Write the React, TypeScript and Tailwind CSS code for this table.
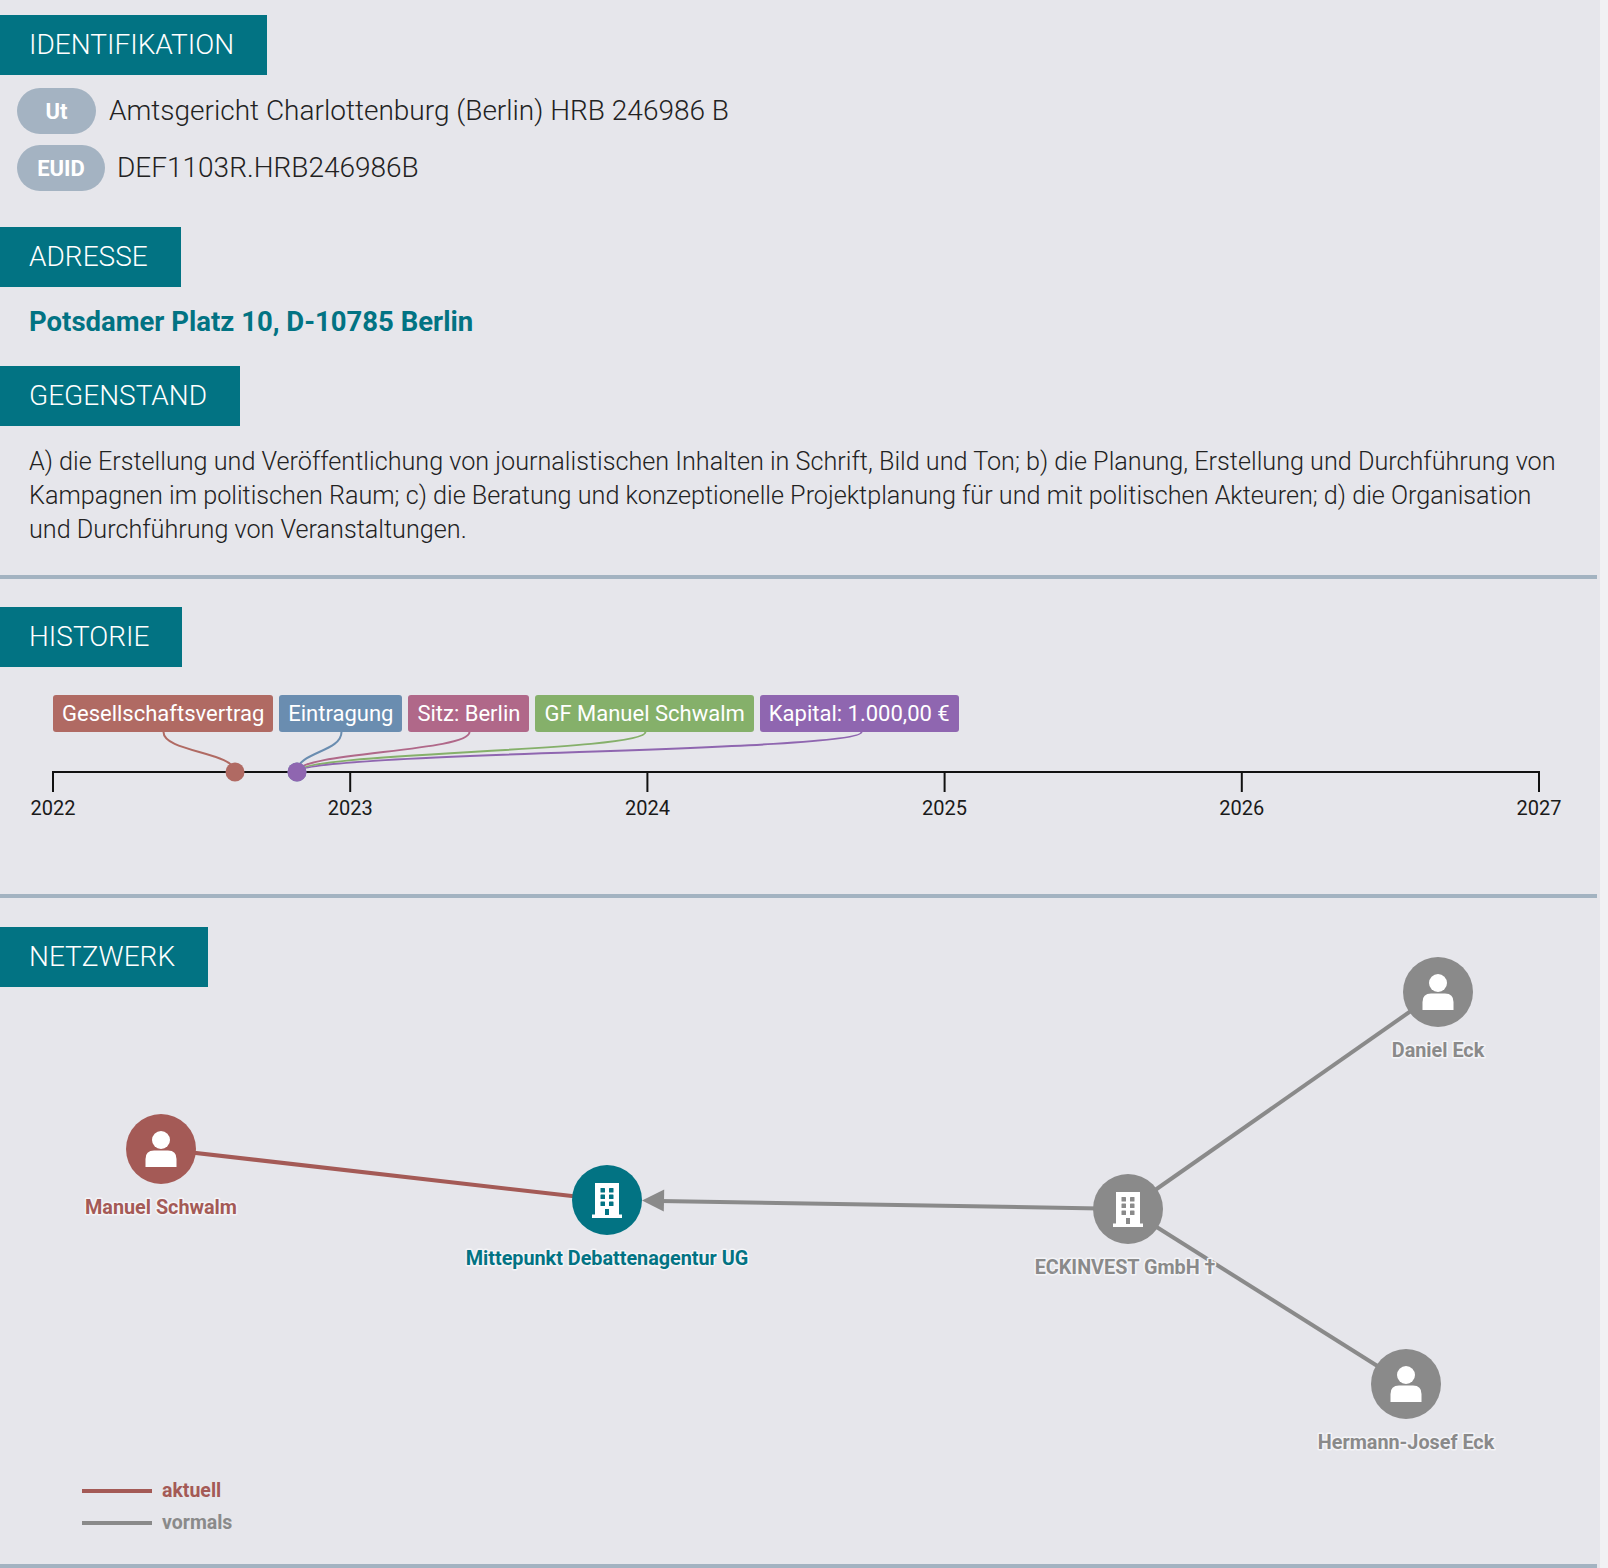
import type { ReactNode } from "react";

const TEAL = "#027383";
const RED = "#a45a56";
const GRAY = "#8a8a8a";

function SectionHeader({ children }: { children: ReactNode }) {
  return (
    <div className="inline-flex h-[60px] items-center bg-[#027383] pl-[29px] pr-[33px] text-[28px] font-light text-white">
      {children}
    </div>
  );
}

function Badge({ label, width }: { label: string; width: string }) {
  return (
    <span
      className={`flex h-[46px] items-center justify-center rounded-full bg-[#a4b3c2] text-[22px] font-bold text-white ${width}`}
    >
      {label}
    </span>
  );
}

const tags = [
  { label: "Gesellschaftsvertrag", bg: "bg-[#b06a63]", color: "#b06a63", x: 163.5, dot: 235 },
  { label: "Eintragung", bg: "bg-[#6a8db0]", color: "#6a8db0", x: 341.5, dot: 297 },
  { label: "Sitz: Berlin", bg: "bg-[#b06889]", color: "#b06889", x: 469.5, dot: 297 },
  { label: "GF Manuel Schwalm", bg: "bg-[#85b06a]", color: "#85b06a", x: 645.5, dot: 297 },
  { label: "Kapital: 1.000,00 €", bg: "bg-[#8f66b0]", color: "#8f66b0", x: 861.5, dot: 297 },
];

const years = [2022, 2023, 2024, 2025, 2026, 2027];

function Timeline() {
  const axisY = 40;
  return (
    <div>
      <div className="mt-[28px] flex gap-[6px] pl-[53px]">
        {tags.map((tag) => (
          <span
            key={tag.label}
            className={`flex h-[37px] items-center rounded-[3px] px-[9px] text-[22px] text-white ${tag.bg}`}
          >
            {tag.label}
          </span>
        ))}
      </div>
      <svg width="1600" height="162" className="block" fontFamily="Roboto, sans-serif">
        {tags.map((tag) => {
          const ym = axisY / 2;
          return (
            <path
              key={tag.label}
              d={`M${tag.x},0 C${tag.x},${ym} ${tag.dot},${ym} ${tag.dot},${axisY}`}
              fill="none"
              stroke={tag.color}
              strokeWidth="2"
            />
          );
        })}
        <line x1="53" y1={axisY} x2="1539" y2={axisY} stroke="#111" strokeWidth="2" />
        {years.map((year, i) => {
          const x = 53 + i * 297.2;
          return (
            <g key={year}>
              <line x1={x} y1={axisY - 1} x2={x} y2={axisY + 20} stroke="#111" strokeWidth="2" />
              <text x={x} y={axisY + 43} textAnchor="middle" fontSize="20" fill="#1a1a1a">
                {year}
              </text>
            </g>
          );
        })}
        <circle cx="235" cy={axisY} r="9.5" fill="#b06a63" />
        <circle cx="297" cy={axisY} r="9.5" fill="#6a8db0" />
        <circle cx="297" cy={axisY} r="9.5" fill="#8f66b0" />
      </svg>
    </div>
  );
}

function PersonIcon({ cx, cy }: { cx: number; cy: number }) {
  return (
    <g transform={`translate(${cx},${cy})`} fill="#fff">
      <circle cx="0" cy="-9" r="9" />
      <path d="M-15.5,18 V10 Q-15.5,1.5 -7,1.5 H7 Q15.5,1.5 15.5,10 V18 Z" />
    </g>
  );
}

function BuildingIcon({ cx, cy, fill }: { cx: number; cy: number; fill: string }) {
  return (
    <g transform={`translate(${cx},${cy})`}>
      <rect x="-12" y="-17" width="24" height="32" fill="#fff" />
      <rect x="-15" y="14.5" width="30" height="3.5" fill="#fff" />
      {[-12, -5.5, 1.5].map((y) => (
        <g key={y}>
          <rect x="-6.5" y={y} width="4.5" height="4.5" rx="0.6" fill={fill} />
          <rect x="2" y={y} width="4.5" height="4.5" rx="0.6" fill={fill} />
        </g>
      ))}
      <rect x="-2" y="9" width="4" height="6" fill={fill} />
    </g>
  );
}

type NodeDef = {
  id: string;
  label: string;
  x: number;
  y: number;
  kind: "person" | "company";
  color: string;
};

const nodes: NodeDef[] = [
  { id: "ms", label: "Manuel Schwalm", x: 161, y: 251, kind: "person", color: RED },
  { id: "md", label: "Mittepunkt Debattenagentur UG", x: 607, y: 302, kind: "company", color: TEAL },
  { id: "ei", label: "ECKINVEST GmbH †", x: 1128, y: 311, kind: "company", color: GRAY },
  { id: "de", label: "Daniel Eck", x: 1438, y: 94, kind: "person", color: GRAY },
  { id: "hj", label: "Hermann-Josef Eck", x: 1406, y: 486, kind: "person", color: GRAY },
];

function Network() {
  return (
    <svg
      width="1600"
      height="666"
      className="absolute left-0 top-0"
      fontFamily="Roboto, sans-serif"
    >
      <line x1="161" y1="251" x2="607" y2="302" stroke={RED} strokeWidth="4" />
      <line x1="1128" y1="311" x2="660" y2="303" stroke={GRAY} strokeWidth="4" />
      <polygon points="642,302.6 664.2,291.6 663.8,313.6" fill={GRAY} />
      <line x1="1128" y1="311" x2="1438" y2="94" stroke={GRAY} strokeWidth="4" />
      <line x1="1128" y1="311" x2="1406" y2="486" stroke={GRAY} strokeWidth="4" />
      {nodes.map((node) => (
        <g key={node.id}>
          <circle cx={node.x} cy={node.y} r="35" fill={node.color} />
          {node.kind === "person" ? (
            <PersonIcon cx={node.x} cy={node.y} />
          ) : (
            <BuildingIcon cx={node.x} cy={node.y} fill={node.color} />
          )}
        </g>
      ))}
      {nodes.map((node) => (
        <text
          key={node.id}
          x={node.x - (node.id === "ei" ? 3 : 0)}
          y={node.y + 65}
          textAnchor="middle"
          fontSize="19.8"
          fontWeight="700"
          fill={node.color}
          stroke="#f4f4f7"
          strokeWidth="3"
          strokeLinejoin="round"
          paintOrder="stroke"
        >
          {node.label}
        </text>
      ))}
    </svg>
  );
}

export default function App() {
  return (
    <div className="flex min-h-[1568px] w-[1608px] font-['Roboto',sans-serif] text-[#222]">
      <main className="w-[1600px] bg-[#e6e6eb] pt-[15px]">
        <SectionHeader>IDENTIFIKATION</SectionHeader>
        <div className="mt-[13px] flex flex-col gap-[11px] pl-[17px]">
          <div className="flex items-center gap-[13px]">
            <Badge label="Ut" width="w-[79px]" />
            <span className="text-[28px] font-light">
              Amtsgericht Charlottenburg (Berlin) HRB 246986 B
            </span>
          </div>
          <div className="flex items-center gap-[12px]">
            <Badge label="EUID" width="w-[88px]" />
            <span className="text-[28px] font-light">DEF1103R.HRB246986B</span>
          </div>
        </div>

        <div className="mt-[36px]">
          <SectionHeader>ADRESSE</SectionHeader>
        </div>
        <div className="mt-[18px] px-[29px] text-[27.5px] font-bold leading-[34px] text-[#027383]">
          Potsdamer Platz 10, D-10785 Berlin
        </div>

        <div className="mt-[27px]">
          <SectionHeader>GEGENSTAND</SectionHeader>
        </div>
        <p className="mt-[19px] px-[29px] text-[25.2px] font-light leading-[34px]">
          A) die Erstellung und Veröffentlichung von journalistischen Inhalten in Schrift, Bild und
          Ton; b) die Planung, Erstellung und Durchführung von Kampagnen im politischen Raum; c) die
          Beratung und konzeptionelle Projektplanung für und mit politischen Akteuren; d) die
          Organisation und Durchführung von Veranstaltungen.
        </p>

        <div className="mt-[28px] h-[4px] w-[1597px] bg-[#a3b3c1]" />

        <div className="mt-[28px]">
          <SectionHeader>HISTORIE</SectionHeader>
        </div>
        <Timeline />

        <div className="h-[4px] w-[1597px] bg-[#a3b3c1]" />

        <section className="relative flex h-[666px] flex-col">
          <Network />
          <div className="relative mt-[29px]">
            <SectionHeader>NETZWERK</SectionHeader>
          </div>
          <div className="relative mt-auto flex flex-col pb-[25px] pl-[82px] text-[19.5px] font-bold">
            <div className="flex h-[32px] items-center gap-[10px] text-[#a45a56]">
              <span className="h-[4px] w-[70px] bg-[#a45a56]" />
              aktuell
            </div>
            <div className="flex h-[32px] items-center gap-[10px] text-[#8a8a8a]">
              <span className="h-[4px] w-[70px] bg-[#8a8a8a]" />
              vormals
            </div>
          </div>
        </section>

        <div className="h-[4px] w-[1597px] bg-[#a3b3c1]" />
      </main>
      <div className="w-[8px] bg-[#f1f1f3]" />
    </div>
  );
}
